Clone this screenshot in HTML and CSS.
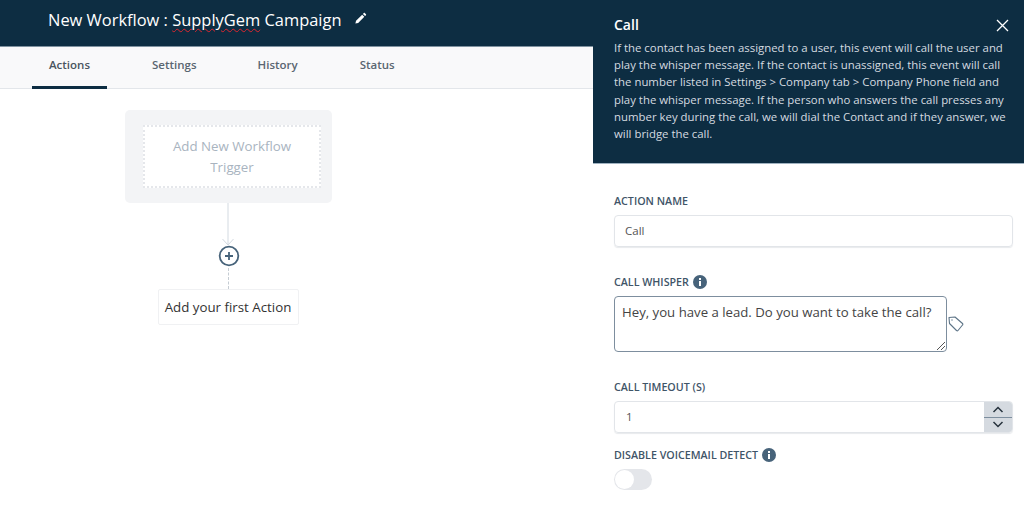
FILE: index.html
```html
<!DOCTYPE html>
<html lang="en">
<head>
<meta charset="utf-8">
<title>New Workflow</title>
<link rel="stylesheet" href="styles.css">
</head>
<body>
<div class="app">
  <main class="main">
    <header class="topbar">
      <h1 class="title">New Workflow : <span class="misspelt">SupplyGem</span> Campaign</h1>
      <svg class="pencil" width="13" height="13" viewBox="0 0 14 14"><path d="M1.500 12.500l.7-3L8.800 2.900l2.300 2.300-6.600 6.600zM9.600 2.100l1-1c.3-.3.7-.3 1 0l1.300 1.300c.3.3.3.7 0 1l-1 1z" fill="#fff"/></svg>
    </header>
    <nav class="tabs">
      <a class="tab tab-active">Actions</a>
      <a class="tab tab-settings">Settings</a>
      <a class="tab tab-history">History</a>
      <a class="tab tab-status">Status</a>
    </nav>
    <section class="canvas">
      <div class="flow">
        <div class="trigger-card">
          <div class="trigger-inner">Add New Workflow<br>Trigger</div>
        </div>
        <div class="line-wrap">
          <svg width="20" height="43" viewBox="0 0 20 43"><path d="M10 0v42M4.500 36l5.500 6 5.500-6" fill="none" stroke="#d3dae1" stroke-width="1"/></svg>
        </div>
        <svg class="plus" width="22" height="22" viewBox="0 0 22 22"><circle cx="11" cy="11" r="9.300" fill="#fff" stroke="#47637a" stroke-width="1.800"/><path d="M7 11h8M11 7v8" stroke="#47637a" stroke-width="1.800"/></svg>
        <div class="dash"></div>
        <div class="action-card">Add your first Action</div>
      </div>
    </section>
  </main>
  <aside class="panel">
    <header class="panel-head">
      <div class="panel-title-row">
        <h2 class="panel-title">Call</h2>
        <svg width="13" height="13" viewBox="0 0 13 13"><path d="M1 1l11 11M12 1L1 12" stroke="#fff" stroke-width="1.300" fill="none"/></svg>
      </div>
      <p class="panel-desc">If the contact has been assigned to a user, this event will call the user and play the whisper message. If the contact is unassigned, this event will call the number listed in Settings &gt; Company tab &gt; Company Phone field and play the whisper message. If the person who answers the call presses any number key during the call, we will dial the Contact and if they answer, we will bridge the call.</p>
    </header>
    <form class="form">
      <div class="field field-name">
        <div class="label">ACTION NAME</div>
        <div class="input">Call</div>
      </div>
      <div class="field field-whisper">
        <div class="label">CALL WHISPER
          <svg class="info" width="14" height="14" viewBox="0 0 14 14"><circle cx="7" cy="7" r="7" fill="#47637a"/><rect x="6" y="6" width="2" height="5" fill="#fff"/><rect x="6" y="3" width="2" height="2" fill="#fff"/></svg>
        </div>
        <div class="whisper-row">
          <div class="textarea">Hey, you have a lead. Do you want to take the call?
            <svg class="grip" width="10" height="10" viewBox="0 0 10 10"><path d="M1 9l8-8M5 9l4-4" stroke="#555" stroke-width="1"/></svg>
          </div>
          <svg class="tag" width="16" height="16" viewBox="0 0 16 16"><path d="M1 1.500l6-.5 7.500 6.500a1 1 0 0 1 0 1.500L10 14.500a1 1 0 0 1-1.500 0L1.500 7.500z" fill="#fff" stroke="#5d7487" stroke-width="1.100" stroke-linejoin="round"/><circle cx="4" cy="4" r=".7" fill="#5d7487"/></svg>
        </div>
      </div>
      <div class="field field-timeout">
        <div class="label">CALL TIMEOUT (S)</div>
        <div class="number">
          <span class="number-value">1</span>
          <div class="spinner">
            <span class="spin spin-up"><svg width="12" height="7" viewBox="0 0 12 7"><path d="M1.500 6L6 1.500 10.500 6" fill="none" stroke="#27333d" stroke-width="1.500"/></svg></span>
            <span class="spin"><svg width="12" height="7" viewBox="0 0 12 7"><path d="M1.500 1L6 5.500 10.500 1" fill="none" stroke="#27333d" stroke-width="1.500"/></svg></span>
          </div>
        </div>
      </div>
      <div class="field field-vm">
        <div class="label">DISABLE VOICEMAIL DETECT
          <svg class="info" width="14" height="14" viewBox="0 0 14 14"><circle cx="7" cy="7" r="7" fill="#47637a"/><rect x="6" y="6" width="2" height="5" fill="#fff"/><rect x="6" y="3" width="2" height="2" fill="#fff"/></svg>
        </div>
        <div class="toggle"><span class="knob"></span></div>
      </div>
    </form>
  </aside>
</div>
</body>
</html>
```
FILE: styles.css
```css
* { box-sizing: border-box; }
html, body { margin: 0; height: 100%; }
body { font-family: "Open Sans", "Noto Sans", sans-serif; background: #fff; color: #333; overflow: hidden; }
.app { display: flex; width: 1024px; height: 514px; overflow: hidden; }
.main { width: 593px; flex: none; display: flex; flex-direction: column; }
.topbar { height: 47px; background: #0d2d42; border-bottom: 1px solid #7f92a0; display: flex; align-items: center; padding: 0 0 7px 48px; gap: 12px; }
.title { margin: 0; font-size: 16.450px; font-weight: 400; color: #fff; line-height: 28px; white-space: nowrap; }
.misspelt { text-decoration: underline wavy #e0262e 1px; text-underline-offset: 2px; }
.pencil { flex: none; margin-top: -2px; }
.tabs { height: 42px; background: #f9f9fa; display: flex; padding-left: 5px; border-bottom: 1px solid #e3e6ea; }
.tab { font-size: 11.500px; font-weight: 600; color: #5a6671; line-height: 36px; height: 42px; text-align: center; white-space: nowrap; }
.tab-active { width: 75px; margin-left: 27px; color: #4a5560; border-bottom: 3px solid #0d2d42; }
.tab-settings { margin-left: 45px; }
.tab-history { margin-left: 61px; }
.tab-status { margin-left: 62px; }
.canvas { flex: 1; padding: 21px 0 0 125px; }
.flow { width: 207px; display: flex; flex-direction: column; align-items: center; }
.trigger-card { width: 207px; height: 93px; background: #f3f4f6; border-radius: 5px; padding: 15px 11px 15px 18px; }
.trigger-inner { height: 63px; background: #fff; border: 2px dotted #e5e7eb; color: #a9b4bf; font-size: 13.300px; line-height: 21px; text-align: center; padding-top: 9px; }
.line-wrap { height: 43px; margin-left: -1px; }
.line-wrap svg { display: block; }
.plus { display: block; margin-top: -1px; flex: none; }
.dash { height: 21px; width: 0; border-left: 1px dashed #c5ccd3; margin-top: 1px; }
.action-card { border: 1px solid #f0f1f3; border-radius: 2px; background: #fff; color: #333; font-size: 13.300px; height: 36px; line-height: 34px; width: 141px; text-align: center; white-space: nowrap; margin-left: -1px; }
.panel { width: 431px; flex: none; display: flex; flex-direction: column; background: #fff; }
.panel-head { height: 164px; background: #0d2d42; border-bottom: 1px solid #9fb2c0; padding: 14px 15px 0 21px; color: #fff; }
.panel-title-row { display: flex; justify-content: space-between; align-items: center; height: 22px; }
.panel-title { margin: 0; font-size: 14px; font-weight: 600; line-height: 22px; }
.panel-desc { margin: 3px 0 0; font-size: 11.400px; line-height: 17.200px; color: #d5dbe0; width: 400px; }
.form { padding: 29px 11px 0 21px; display: flex; flex-direction: column; }
.label { font-size: 10.700px; font-weight: 600; color: #3f5568; line-height: 16px; height: 16px; display: flex; align-items: center; gap: 4px; white-space: nowrap; }
.info { flex: none; }
.input { margin-top: 6px; height: 32px; border: 1px solid #e2e5e9; border-radius: 4px; box-shadow: 0 1px 1px #e8eaed; font-size: 11.500px; color: #555; line-height: 30px; padding-left: 10px; }
.field-whisper { margin-top: 27px; }
.whisper-row { display: flex; align-items: flex-start; margin-top: 6px; gap: 1px; }
.textarea { position: relative; width: 333px; height: 56px; border: 1px solid #7d8e9e; border-radius: 4px; font-size: 13.200px; color: #444; padding: 5px 0 0 7px; line-height: 20px; white-space: nowrap; }
.grip { position: absolute; right: 0; bottom: 0; }
.tag { flex: none; margin-top: 20px; }
.field-timeout { margin-top: 27px; }
.number { margin-top: 6px; height: 32px; border: 1px solid #e2e5e9; border-radius: 4px; display: flex; justify-content: space-between; overflow: hidden; box-shadow: 0 1px 1px #e8eaed; }
.number-value { font-size: 11.500px; color: #555; line-height: 30px; padding-left: 11px; }
.spinner { width: 28px; background: #d5dae0; display: flex; flex-direction: column; }
.spin { flex: 1; display: flex; align-items: center; justify-content: center; }
.spin-up { border-bottom: 1px solid #7d8e9e; }
.field-vm { margin-top: 14px; }
.toggle { margin-top: 6px; width: 38px; height: 21px; border-radius: 11px; background: #e4e6ea; padding: 1px; }
.knob { display: block; width: 19px; height: 19px; border-radius: 50%; background: #fff; }
```
